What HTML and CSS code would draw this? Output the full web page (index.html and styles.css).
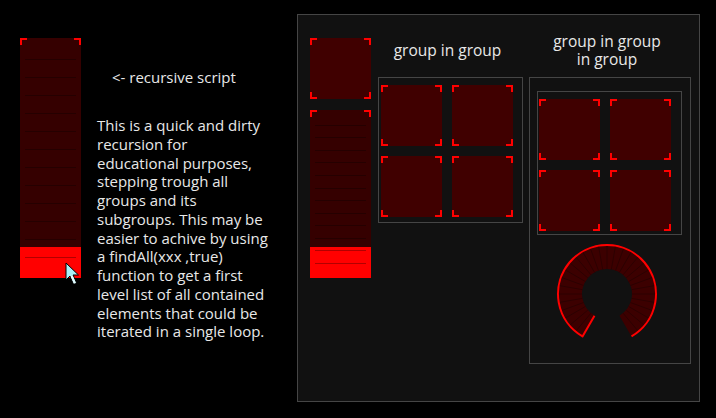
FILE: index.html
```html
<!DOCTYPE html>
<html>
<head>
<meta charset="utf-8">
<link rel="stylesheet" href="styles.css">
</head>
<body>
<div class="stage">
  <div class="left">
    <div class="fader fader-tall corners">
      <div class="fader-fill" style="height:31px"></div>
      <div class="ticks"><i></i><i></i><i></i><i></i><i></i><i></i><i></i><i></i><i></i><i></i><i></i><i></i></div>
    </div>
    <div class="notes">
      <p class="caption">&lt;- recursive script</p>
      <p class="para">This is a quick and dirty<br>recursion for<br>educational purposes,<br>stepping trough all<br>groups and its<br>subgroups. This may be<br>easier to achive by using<br>a findAll(xxx ,true)<br>function to get a first<br>level list of all contained<br>elements that could be<br>iterated in a single loop.</p>
    </div>
  </div>
  <div class="panel">
    <div class="col col-buttons">
      <div class="btn corners"></div>
      <div class="fader fader-short corners">
        <div class="fader-fill" style="height:31px"></div>
        <div class="ticks"><i></i><i></i><i></i><i></i><i></i><i></i><i></i><i></i><i></i><i></i><i></i><i></i></div>
      </div>
    </div>
    <div class="col col-g1">
      <div class="title">group in group</div>
      <div class="group g1">
        <div class="btn corners"></div>
        <div class="btn corners"></div>
        <div class="btn corners"></div>
        <div class="btn corners"></div>
      </div>
    </div>
    <div class="col col-g2">
      <div class="title title-two"><span>group in group</span><span>in group</span></div>
      <div class="group g2">
        <div class="group g2-inner">
          <div class="btn corners"></div>
          <div class="btn corners"></div>
          <div class="btn corners"></div>
          <div class="btn corners"></div>
        </div>
        <svg class="knob" viewBox="0 0 100 100">
          <path class="knob-body" d="M37.5 71.65 L25.5 92.44 A49 49 0 1 1 74.5 92.44 L62.5 71.65 A25 25 0 1 0 37.5 71.65 Z"/>
          <g class="knob-ticks">
            <line x1="50" y1="25" x2="50" y2="2" transform="rotate(-140 50 50)"/>
            <line x1="50" y1="25" x2="50" y2="2" transform="rotate(-130 50 50)"/>
            <line x1="50" y1="25" x2="50" y2="2" transform="rotate(-120 50 50)"/>
            <line x1="50" y1="25" x2="50" y2="2" transform="rotate(-110 50 50)"/>
            <line x1="50" y1="25" x2="50" y2="2" transform="rotate(-100 50 50)"/>
            <line x1="50" y1="25" x2="50" y2="2" transform="rotate(-90 50 50)"/>
            <line x1="50" y1="25" x2="50" y2="2" transform="rotate(-80 50 50)"/>
            <line x1="50" y1="25" x2="50" y2="2" transform="rotate(-70 50 50)"/>
            <line x1="50" y1="25" x2="50" y2="2" transform="rotate(-60 50 50)"/>
            <line x1="50" y1="25" x2="50" y2="2" transform="rotate(-50 50 50)"/>
            <line x1="50" y1="25" x2="50" y2="2" transform="rotate(-40 50 50)"/>
            <line x1="50" y1="25" x2="50" y2="2" transform="rotate(-30 50 50)"/>
            <line x1="50" y1="25" x2="50" y2="2" transform="rotate(-20 50 50)"/>
            <line x1="50" y1="25" x2="50" y2="2" transform="rotate(-10 50 50)"/>
            <line x1="50" y1="25" x2="50" y2="2" transform="rotate(0 50 50)"/>
            <line x1="50" y1="25" x2="50" y2="2" transform="rotate(10 50 50)"/>
            <line x1="50" y1="25" x2="50" y2="2" transform="rotate(20 50 50)"/>
            <line x1="50" y1="25" x2="50" y2="2" transform="rotate(30 50 50)"/>
            <line x1="50" y1="25" x2="50" y2="2" transform="rotate(40 50 50)"/>
            <line x1="50" y1="25" x2="50" y2="2" transform="rotate(50 50 50)"/>
            <line x1="50" y1="25" x2="50" y2="2" transform="rotate(60 50 50)"/>
            <line x1="50" y1="25" x2="50" y2="2" transform="rotate(70 50 50)"/>
            <line x1="50" y1="25" x2="50" y2="2" transform="rotate(80 50 50)"/>
            <line x1="50" y1="25" x2="50" y2="2" transform="rotate(90 50 50)"/>
            <line x1="50" y1="25" x2="50" y2="2" transform="rotate(100 50 50)"/>
            <line x1="50" y1="25" x2="50" y2="2" transform="rotate(110 50 50)"/>
            <line x1="50" y1="25" x2="50" y2="2" transform="rotate(120 50 50)"/>
            <line x1="50" y1="25" x2="50" y2="2" transform="rotate(130 50 50)"/>
            <line x1="50" y1="25" x2="50" y2="2" transform="rotate(140 50 50)"/>
          </g>
          <path class="knob-edge" d="M37.5 71.65 L25.5 92.44 A49 49 0 1 1 74.5 92.44"/>
        </svg>
      </div>
    </div>
  </div>
  <svg class="cursor" viewBox="0 0 16 26" width="16" height="26">
    <path class="cursor-head" d="M1 1 L1 18 L5 14 L8.5 22 L11.5 20.8 L8 13 L13.5 13 Z"/>
    <path class="cursor-tail" d="M5.6 14.6 L8.9 21.8 L10.9 21 L7.6 13.6 Z"/>
  </svg>
</div>
</body>
</html>
```

FILE: styles.css
```css
* { box-sizing: border-box; }

body {
  margin: 0;
  background: #000;
  font-family: "Open Sans", "DejaVu Sans", sans-serif;
  color: #e8e8e8;
}

.stage {
  position: relative;
  width: 716px;
  height: 418px;
  display: flex;
  align-items: flex-start;
}

.corners {
  background:
    linear-gradient(#f00, #f00) left top / 7px 2px no-repeat,
    linear-gradient(#f00, #f00) left top / 2px 7px no-repeat,
    linear-gradient(#f00, #f00) right top / 7px 2px no-repeat,
    linear-gradient(#f00, #f00) right top / 2px 7px no-repeat,
    linear-gradient(#f00, #f00) left bottom / 7px 2px no-repeat,
    linear-gradient(#f00, #f00) left bottom / 2px 7px no-repeat,
    linear-gradient(#f00, #f00) right bottom / 7px 2px no-repeat,
    linear-gradient(#f00, #f00) right bottom / 2px 7px no-repeat,
    #400000;
}

.left {
  width: 297px;
  display: flex;
  align-items: flex-start;
}

.fader {
  position: relative;
  width: 61px;
  display: flex;
  flex-direction: column;
  justify-content: flex-end;
}
.fader.corners {
  background-color: #350000;
}

.fader-tall {
  height: 240px;
  margin: 38px 0 0 20px;
}

.fader-short {
  height: 168px;
}

.fader-fill {
  background: #ff0000;
  border-radius: 0 0 2px 2px;
}

.ticks {
  position: absolute;
  left: 5px;
  right: 5px;
  top: 8.8%;
  bottom: 8.3%;
  display: flex;
  flex-direction: column;
  justify-content: space-between;
}

.ticks i {
  display: block;
  height: 1px;
  background: rgba(0, 0, 0, 0.3);
}

.notes {
  margin-left: 16px;
}

.notes p {
  margin: 0;
  font-size: 15px;
  white-space: nowrap;
}

.caption {
  margin-top: 68px !important;
  padding-left: 15px;
  line-height: 19px;
}

.para {
  margin-top: 29px !important;
  line-height: 18.75px;
}

.panel {
  margin-top: 14px;
  width: 403px;
  height: 388px;
  border: 1px solid #454545;
  background: #111;
  display: flex;
  align-items: flex-start;
  padding-left: 12px;
}

.col-buttons {
  margin-top: 23px;
  display: flex;
  flex-direction: column;
  gap: 11px;
}

.btn {
  width: 61px;
  height: 61px;
}

.col-g1 {
  margin-left: 7px;
  width: 145px;
}

.col-g2 {
  margin-left: 6px;
  width: 162px;
}

.title {
  height: 62px;
  padding: 7px 6px 0 0;
  display: flex;
  flex-direction: column;
  align-items: center;
  justify-content: center;
  text-align: center;
  font-size: 15.5px;
  line-height: 18px;
  white-space: nowrap;
}

.title-two span {
  display: block;
  height: 18px;
}

.group {
  border: 1px solid #454545;
  display: grid;
  grid-template-columns: 61px 61px;
  gap: 10px;
}

.g1 {
  padding: 7px 9px 5px 2px;
}

.g2 {
  display: block;
  height: 287px;
  padding: 13px 0 0 7px;
}

.g2-inner {
  width: 145px;
  padding: 7px 10px 3px 1px;
}

.knob {
  display: block;
  width: 100px;
  height: 100px;
  margin: 9px 0 0 20px;
  overflow: visible;
}

.knob-body {
  fill: #3c0000;
}

.knob-ticks line {
  stroke: #2a0000;
  stroke-width: 0.8;
}

.knob-edge {
  fill: none;
  stroke: #ff0000;
  stroke-width: 2;
  stroke-linejoin: round;
}

.cursor {
  position: absolute;
  left: 65px;
  top: 262px;
}

.cursor-head {
  fill: #a9f0f8;
  stroke: #000;
  stroke-width: 1;
  stroke-linejoin: miter;
}

.cursor-tail {
  fill: #e6fcff;
}
```
